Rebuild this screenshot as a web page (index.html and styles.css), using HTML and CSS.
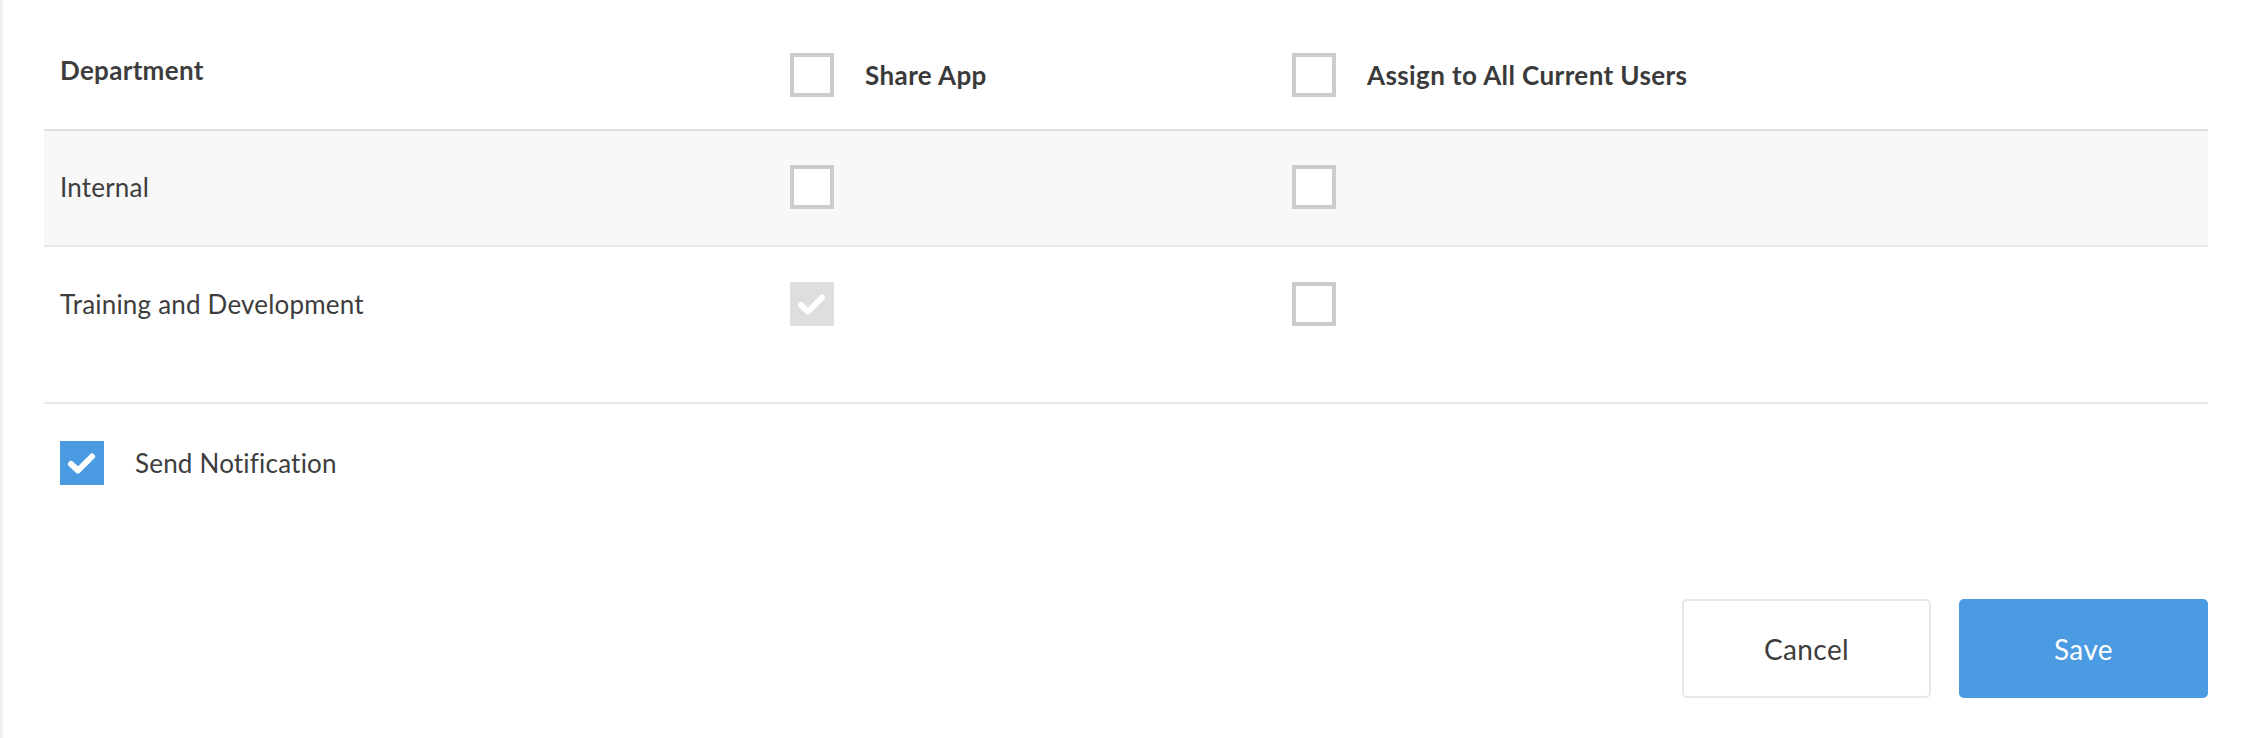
FILE: index.html
```html
<!DOCTYPE html>
<html lang="en">
<head>
<meta charset="utf-8">
<title>Share App</title>
<link rel="stylesheet" href="styles.css">
</head>
<body>
<div class="page">
  <div class="table">
    <div class="row head">
      <div class="cell name head-name">Department</div>
      <div class="cell"><span class="box"></span><span class="label">Share App</span></div>
      <div class="cell"><span class="box"></span><span class="label">Assign to All Current Users</span></div>
    </div>
    <div class="row alt">
      <div class="cell name">Internal</div>
      <div class="cell"><span class="box"></span></div>
      <div class="cell"><span class="box"></span></div>
    </div>
    <div class="row tall">
      <div class="cell name">Training and Development</div>
      <div class="cell"><span class="box disabled"><svg viewBox="0 0 44 44" class="check"><path d="M11 23 L18 29.5 L32 15.5"/></svg></span></div>
      <div class="cell"><span class="box"></span></div>
    </div>
  </div>
  <div class="notify">
    <span class="box checked"><svg viewBox="0 0 44 44" class="check"><path d="M11 23 L18 29.5 L32 15.5"/></svg></span>
    <span class="notify-label">Send Notification</span>
  </div>
  <div class="actions">
    <button class="btn cancel">Cancel</button>
    <button class="btn save">Save</button>
  </div>
</div>
</body>
</html>
```

FILE: styles.css
```css
html, body {
  margin: 0;
  padding: 0;
  background: #ffffff;
}
body {
  font-family: Lato, "Liberation Sans", sans-serif;
  color: #3d3d3d;
  font-size: 26px;
  letter-spacing: 0.2px;
}
.page {
  box-sizing: border-box;
  width: 2248px;
  height: 738px;
  border-left: 3px solid #f2f2f2;
  padding: 0 40px 0 41px;
  display: flex;
  flex-direction: column;
}
.table {
  display: flex;
  flex-direction: column;
}
.row {
  display: grid;
  grid-template-columns: 746px 502px 1fr;
  align-items: start;
  box-sizing: border-box;
}
.row.head {
  height: 131px;
  padding-top: 53px;
  border-bottom: 2px solid #dedede;
}
.row.alt {
  height: 116px;
  padding-top: 34px;
  background: #f8f8f8;
  border-bottom: 2px solid #e7e9eb;
}
.row.tall {
  height: 157px;
  padding-top: 35px;
  border-bottom: 2px solid #e9e9e9;
}
.cell {
  display: flex;
  align-items: center;
  height: 44px;
}
.cell.name {
  padding-left: 16px;
  line-height: 44px;
}
.cell.head-name {
  font-weight: 700;
  letter-spacing: 0.3px;
  margin-top: -5px;
}
.box {
  box-sizing: border-box;
  width: 44px;
  height: 44px;
  border: 4px solid #cccccc;
  background: #ffffff;
  flex: none;
  display: flex;
  align-items: center;
  justify-content: center;
}
.box.disabled {
  border: none;
  background: #dedede;
}
.box.checked {
  border: none;
  background: #4a9be2;
}
.check {
  width: 44px;
  height: 44px;
  display: block;
}
.check path {
  fill: none;
  stroke: #ffffff;
  stroke-width: 6;
  stroke-linecap: round;
  stroke-linejoin: round;
}
.label {
  margin-left: 31px;
  font-weight: 700;
  letter-spacing: 0.4px;
  color: #3a3a3a;
}
.notify {
  display: flex;
  align-items: center;
  margin-top: 37px;
  padding-left: 16px;
  height: 44px;
}
.notify-label {
  margin-left: 31px;
}
.actions {
  display: flex;
  justify-content: flex-end;
  gap: 28px;
  margin-top: 114px;
}
.btn {
  box-sizing: border-box;
  width: 249px;
  height: 99px;
  border-radius: 5px;
  font-family: Lato, "Liberation Sans", sans-serif;
  font-size: 28px;
  letter-spacing: 0.4px;
  cursor: pointer;
}
.btn.cancel {
  background: #ffffff;
  border: 2px solid #e8e8e8;
  color: #3d3d3d;
}
.btn.save {
  background: #4a9be2;
  border: none;
  color: #ffffff;
}
```
